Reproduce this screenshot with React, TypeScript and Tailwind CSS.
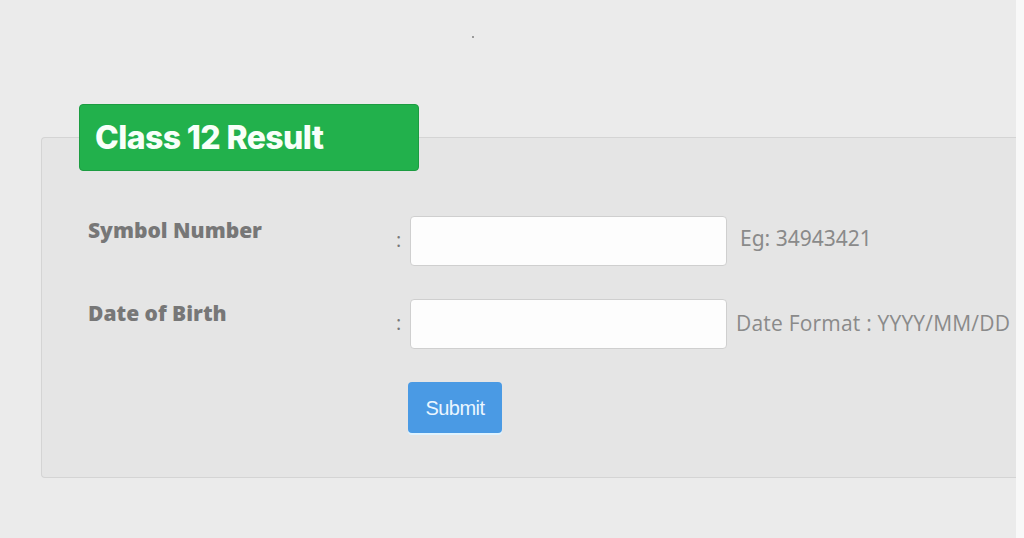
export default function App() {
  return (
    <div className="flex h-[538px] w-full overflow-hidden bg-[#ebebeb] font-['Open_Sans',sans-serif]">
      <main className="flex-1">
        <div className="flex h-[137px] flex-col">
          <div className="ml-[472px] mt-[36px] h-[2px] w-[2px] bg-[#9a9a9a]" />
        </div>
        <section className="ml-[41px] h-[341px] rounded-l-[4px] border border-r-0 border-[#d4d4d4] bg-[#e5e5e5]">
          <div className="-mt-[34px] ml-[37px] flex h-[67px] w-[340px] items-center rounded-[4px] border border-[#1c9c41] bg-[#22b14c] pl-[15px]">
            <h1 className="font-['Inter',sans-serif] text-[32px] font-extrabold tracking-[-0.6px] text-[#f8fff9]">
              Class 12 Result
            </h1>
          </div>

          <div className="mt-[45px] flex flex-col gap-[33px] pl-[46px]">
            <FormRow
              label="Symbol Number"
              hint="Eg: 34943421"
              hintClass="ml-[13px] font-['Noto_Sans',sans-serif] text-[21px] -mt-[4px]"
            />
            <FormRow
              label="Date of Birth"
              hint="Date Format : YYYY/MM/DD"
              hintClass="ml-[9px] text-[21px] tracking-[0.2px]"
            />
            <div className="pl-[320px]">
              <button className="h-[51px] w-[94px] rounded-[4px] bg-[#4a9ae4] font-['Liberation_Sans',sans-serif] text-[20px] tracking-[-0.5px] text-[#eaf6ff] shadow-[0_2px_0_#dff3ff]">
                Submit
              </button>
            </div>
          </div>
        </section>
      </main>
      <aside className="w-[8px] bg-[#f8f8f8]" />
    </div>
  );
}

function FormRow({
  label,
  hint,
  hintClass,
}: {
  label: string;
  hint: string;
  hintClass: string;
}) {
  return (
    <div className="flex h-[50px] items-start">
      <label className="w-[308px] -mt-[1px] text-[21px] font-extrabold text-[#777777]">{label}</label>
      <span className="w-[14px] pt-[9px] text-[20px] text-[#777777]">:</span>
      <input className="h-[50px] w-[317px] rounded-[4px] border border-[#cfcfcf] bg-[#fdfdfd]" />
      <span className={`self-center text-[#8a8a8a] ${hintClass}`}>{hint}</span>
    </div>
  );
}
